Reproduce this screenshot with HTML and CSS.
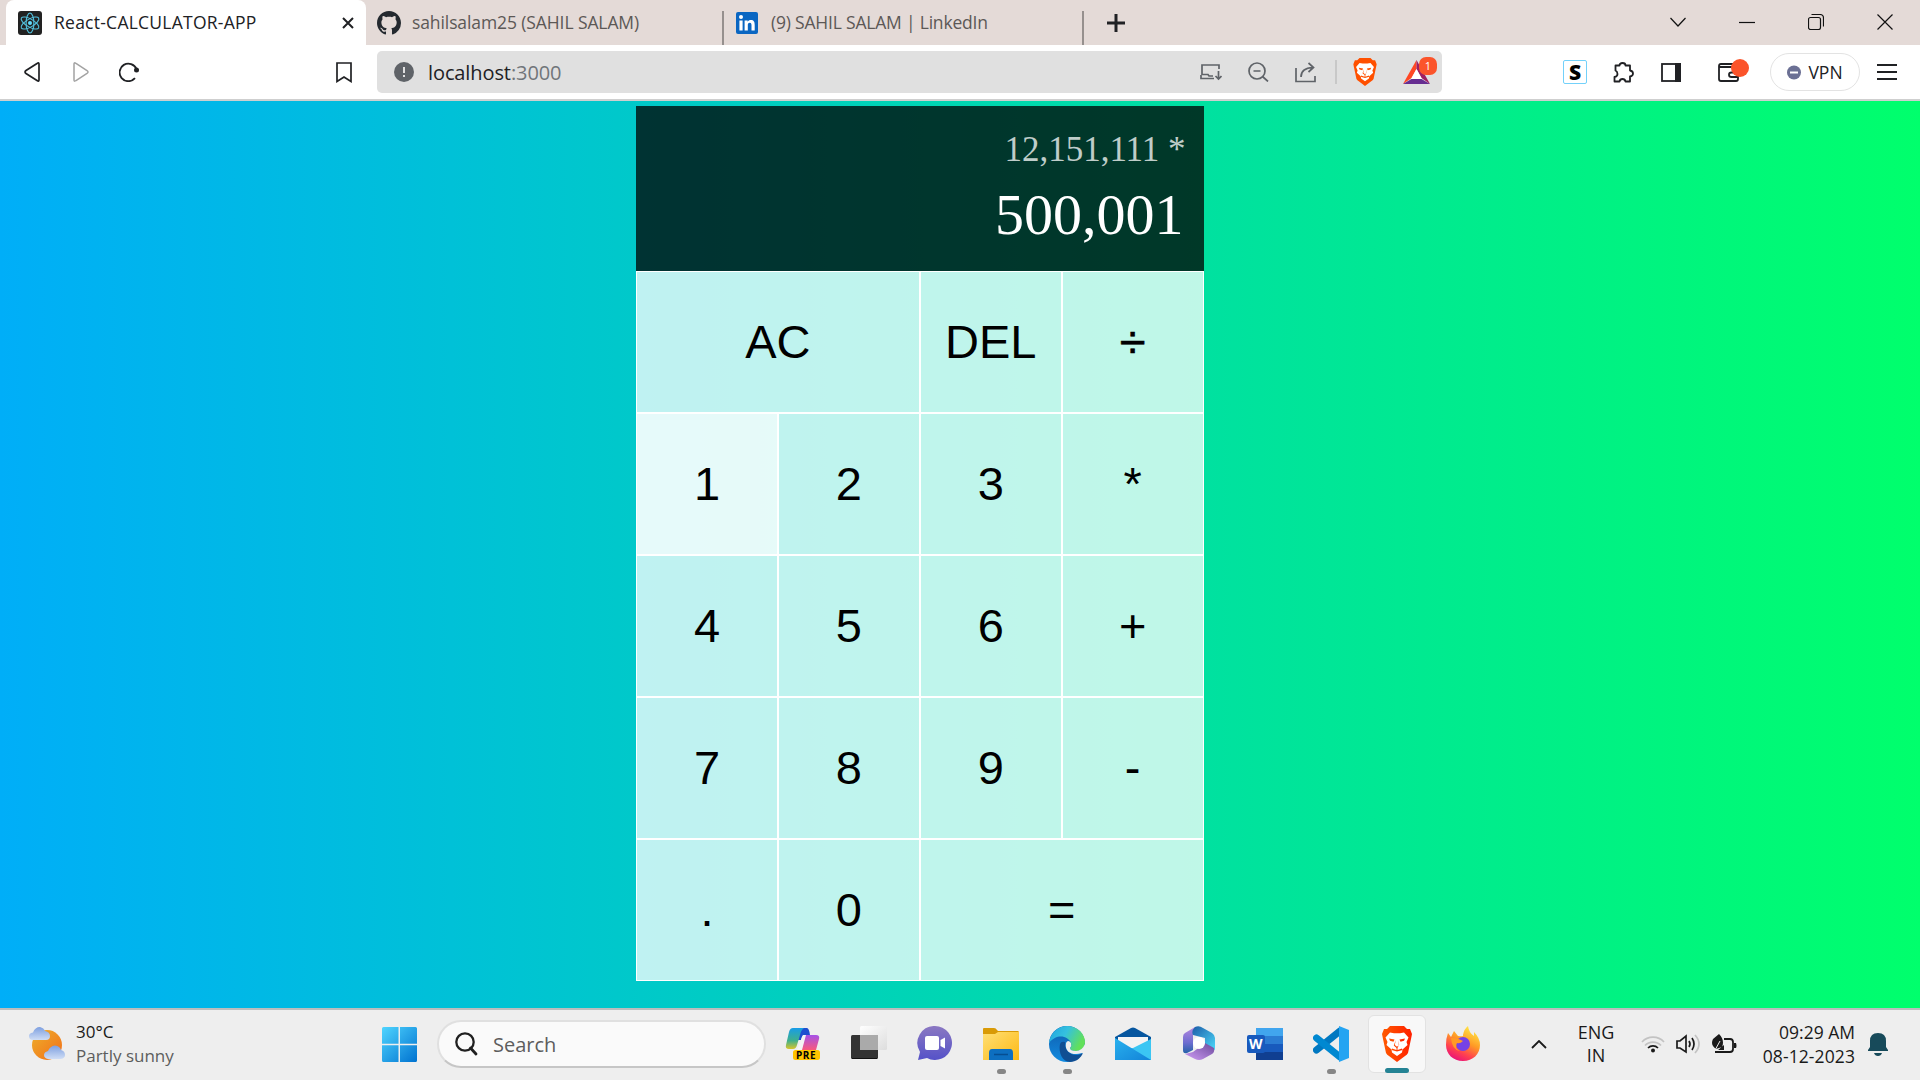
FILE: index.html
```html
<!DOCTYPE html>
<html lang="en">
<head>
<meta charset="utf-8">
<title>React-CALCULATOR-APP</title>
<link rel="stylesheet" href="styles.css">
</head>
<body>
<svg width="0" height="0" class="defs" aria-hidden="true">
  <defs>
    <linearGradient id="win" x1="0" y1="0" x2="1" y2="1"><stop offset="0" stop-color="#4fd5ff"/><stop offset="1" stop-color="#0072d0"/></linearGradient>
    <linearGradient id="sun" x1="0" y1="0" x2="1" y2="1"><stop offset="0" stop-color="#edb02d"/><stop offset="1" stop-color="#f36d16"/></linearGradient>
    <linearGradient id="cloud" x1="0" y1="0" x2="0" y2="1"><stop offset="0" stop-color="#7d9fe0"/><stop offset="1" stop-color="#cfddf5"/></linearGradient>
    <linearGradient id="copA" x1="0" y1="0" x2="0" y2="1"><stop offset="0" stop-color="#179ce8"/><stop offset=".6" stop-color="#3fb08c"/><stop offset="1" stop-color="#d8c52c"/></linearGradient>
    <linearGradient id="copB" x1="0" y1="0" x2="0" y2="1"><stop offset="0" stop-color="#a552e8"/><stop offset="1" stop-color="#f9597c"/></linearGradient>
    <linearGradient id="chat" x1="0" y1="0" x2="0" y2="1"><stop offset="0" stop-color="#8b78c2"/><stop offset="1" stop-color="#5552c8"/></linearGradient>
    <linearGradient id="fold" x1="0" y1="0" x2="1" y2="1"><stop offset="0" stop-color="#ffdf75"/><stop offset="1" stop-color="#fdb913"/></linearGradient>
    <linearGradient id="edgeT" x1="0" y1="0" x2="1" y2=".4"><stop offset="0" stop-color="#1fa3e0"/><stop offset=".5" stop-color="#35c1df"/><stop offset="1" stop-color="#62e05a"/></linearGradient>
    <linearGradient id="edgeB" x1="0" y1="0" x2="0" y2="1"><stop offset="0" stop-color="#0f5cab"/><stop offset="1" stop-color="#128be0"/></linearGradient>
    <linearGradient id="mail" x1="0" y1="0" x2="1" y2="1"><stop offset="0" stop-color="#29b1ee"/><stop offset="1" stop-color="#1283d8"/></linearGradient>
    <linearGradient id="offA" x1="0" y1="0" x2="1" y2="1"><stop offset="0" stop-color="#1c5da8"/><stop offset="1" stop-color="#4cd8fa"/></linearGradient>
    <linearGradient id="offB" x1="0" y1="0" x2="0" y2="1"><stop offset="0" stop-color="#b587e0"/><stop offset=".6" stop-color="#6d6dd0"/><stop offset="1" stop-color="#2462a8"/></linearGradient>
    <linearGradient id="offC" x1="0" y1="1" x2="1" y2="0"><stop offset="0" stop-color="#cf9cf5"/><stop offset="1" stop-color="#6b4a9c"/></linearGradient>
    <linearGradient id="brv" x1="0" y1="0" x2="1" y2="0"><stop offset="0" stop-color="#ff5a00"/><stop offset="1" stop-color="#ff2000"/></linearGradient>
    <linearGradient id="ff" x1=".8" y1="0" x2=".3" y2="1"><stop offset="0" stop-color="#fff04c"/><stop offset=".45" stop-color="#ff9a25"/><stop offset=".75" stop-color="#ff4050"/><stop offset="1" stop-color="#e8107c"/></linearGradient>
    <linearGradient id="glass" x1="0" y1="0" x2="1" y2="1"><stop offset="0" stop-color="#fff"/><stop offset="1" stop-color="#ddd"/></linearGradient>
    <symbol id="lion" viewBox="0 0 30 36">
      <path d="M8 0H22L25 3L28 3L30 8L29 13L26 27Q25 29 23 30L15 36L7 30Q5 29 4 27L1 13L0 8L2 3L5 3Z"/>
      <path fill="#fff" d="M8 6.500L12 7.200H18L22 6.500L26.500 11.500L24.500 16L25.500 19L20.500 23.500L20 26.500L15 30L10 26.500L9.500 23.500L4.500 19L5.500 16L3.500 11.500Z"/>
      <path d="M7 12.500L12.500 13.500L11.500 15.800L8 14.800ZM23 12.500L17.500 13.500L18.500 15.800L22 14.800ZM13.800 14L12.800 19L15 20.800L17.200 19L16.200 14L16.800 19.300L15.500 22V24L20 22.500L20.500 24L15 25.600L9.500 24L10 22.500L14.500 24V22L11.800 19.500Z"/>
    </symbol>
  </defs>
</svg>

<header class="tabs">
  <div class="tab tab-active">
    <svg class="fav" width="24" height="24" viewBox="0 0 24 24"><rect width="24" height="24" rx="3" fill="#222"/><g fill="none" stroke="#53c1de" stroke-width="1.1"><ellipse cx="12" cy="12" rx="10" ry="3.900" transform="rotate(30 12 12)"/><ellipse cx="12" cy="12" rx="10" ry="3.900" transform="rotate(90 12 12)"/><ellipse cx="12" cy="12" rx="10" ry="3.900" transform="rotate(150 12 12)"/></g><circle cx="12" cy="12" r="2" fill="#61dafb"/></svg>
    <span class="tab-title t1">React-CALCULATOR-APP</span>
    <svg class="tab-close" width="12" height="12" viewBox="0 0 12 12"><path d="M1 1L11 11M11 1L1 11" stroke="#202124" stroke-width="2"/></svg>
  </div>
  <div class="tab tab-git">
    <svg class="fav" width="24" height="24" viewBox="0 0 16 16"><path fill="#24292f" d="M8 0C3.58 0 0 3.58 0 8c0 3.54 2.29 6.53 5.47 7.59.4.07.55-.17.55-.38 0-.19-.01-.82-.01-1.49-2.01.37-2.53-.49-2.69-.94-.09-.23-.48-.94-.82-1.13-.28-.15-.68-.52-.01-.53.63-.01 1.08.58 1.23.82.72 1.21 1.87.87 2.33.66.07-.52.28-.87.51-1.07-1.78-.2-3.64-.89-3.64-3.95 0-.87.31-1.59.82-2.15-.08-.2-.36-1.02.08-2.12 0 0 .67-.21 2.2.82.64-.18 1.32-.27 2-.27s1.36.09 2 .27c1.53-1.04 2.2-.82 2.2-.82.44 1.1.16 1.92.08 2.12.51.56.82 1.27.82 2.15 0 3.07-1.87 3.75-3.65 3.95.29.25.54.73.54 1.48 0 1.07-.01 1.93-.01 2.2 0 .21.15.46.55.38A8.01 8.01 0 0 0 16 8c0-4.42-3.58-8-8-8z"/></svg>
    <span class="tab-title t2">sahilsalam25 (SAHIL SALAM)</span>
  </div>
  <div class="tab tab-in">
    <svg class="fav" width="22" height="22" viewBox="0 0 22 22"><rect width="22" height="22" rx="2" fill="#0a66c2"/><g fill="#fff"><circle cx="5" cy="5" r="2"/><path d="M3.4 8.4H6.6V18.5H3.4ZM8.6 8.4H11.6V9.8C12.3 8.7 13.4 8.1 14.8 8.1C18 8.1 18.7 10.2 18.7 13V18.5H15.5V13.6C15.5 12.2 15.4 10.8 13.8 10.8C12.2 10.8 11.8 12 11.8 13.4V18.5H8.6Z"/></g></svg>
    <span class="tab-title t3">(9) SAHIL SALAM | LinkedIn</span>
  </div>
  <svg class="newtab" width="18" height="18" viewBox="0 0 18 18"><path d="M9 0V18M0 9H18" stroke="#202124" stroke-width="3"/></svg>
  <div class="winctl">
    <svg width="16" height="16" viewBox="0 0 16 16"><path d="M.5 4L8 12L15.500 4"/></svg>
    <svg width="16" height="16" viewBox="0 0 16 16"><path d="M0 8.500H16"/></svg>
    <svg width="16" height="16" viewBox="0 0 16 16"><rect x=".5" y="3.500" width="12" height="12" rx="2"/><path d="M3.500 .5H12Q15.500 .5 15.500 4V12.500"/></svg>
    <svg width="16" height="16" viewBox="0 0 16 16"><path d="M.5 .5L15.500 15.500M15.500 .5L.5 15.500"/></svg>
  </div>
</header>

<nav class="toolbar">
  <svg class="nav-back" width="16" height="20" viewBox="0 0 16 20"><path d="M15 2V18Q15 20 13 18.500L2 11.500Q0 10 2 8.500L13 1.500Q15 0 15 2Z" fill="none" stroke="#202124" stroke-width="1.700"/></svg>
  <svg class="nav-fwd" width="16" height="20" viewBox="0 0 16 20"><path d="M1 2V18Q1 20 3 18.500L14 11.500Q16 10 14 8.500L3 1.500Q1 0 1 2Z" fill="none" stroke="#a3a3a3" stroke-width="1.500"/></svg>
  <svg class="nav-reload" width="21" height="20" viewBox="0 0 21 20"><path d="M16 16.200A8.800 8.800 0 1 1 17.500 7" fill="none" stroke="#202124" stroke-width="1.800"/><circle cx="17.500" cy="8" r="2.500" fill="#202124"/></svg>
  <svg class="nav-mark" width="16" height="21" viewBox="0 0 16 21"><path d="M1 1H15V19.500L8 15L1 19.500Z" fill="none" stroke="#202124" stroke-width="1.700"/></svg>
  <div class="address">
    <svg class="info" width="20" height="20" viewBox="0 0 20 20"><circle cx="10" cy="10" r="10" fill="#5f6368"/><path d="M10 5V11M10 13V15" stroke="#e0e0e0" stroke-width="2"/></svg>
    <span class="url">localhost<span class="port">:3000</span></span>
    <div class="addr-icons">
      <svg width="22" height="18" viewBox="0 0 22 18" fill="none" stroke="#5f6368" stroke-width="1.700"><path d="M2 12V2H19V6M2 11.500H8L9 13H13M1 12V15.500H14M18.500 8V15.500M15.500 13L18.500 16L21.500 13"/></svg>
      <svg width="21" height="20" viewBox="0 0 21 20" fill="none" stroke="#5f6368" stroke-width="1.700"><circle cx="9" cy="9" r="8"/><path d="M5.500 9H12.500M14.500 14.500L20 19.500"/></svg>
      <svg width="22" height="21" viewBox="0 0 22 21" fill="none" stroke="#5f6368" stroke-width="1.700"><path d="M1 6V19.500H20V14M6 15Q6 6 18 5.500M13.500 1L18.500 5.500L13.500 10"/></svg>
      <i class="addr-sep"></i>
      <svg class="lion-sm" width="24" height="28" fill="#ff5000"><use href="#lion" width="24" height="28"/></svg>
      <div class="bat"><svg width="27" height="24" viewBox="0 0 27 24"><path fill="#ff4724" d="M13.500 0L0 24L8.500 18L13.500 9Z"/><path fill="#9e1f63" d="M13.500 0L27 24L18.500 18L13.500 9Z"/><path fill="#662d91" d="M0 24H27L18.500 19H8.500Z"/><path fill="#fff" d="M13.500 9L19 19H8Z"/></svg><span class="badge">1</span></div>
    </div>
  </div>
  <div class="ext">
    <span class="ext-s">S</span>
    <svg width="21" height="21" viewBox="0 0 21 21"><path fill="none" stroke="#202124" stroke-width="1.800" stroke-linejoin="round" d="M2.500 3.500H6.500Q6.500 1 9.500 1Q12.500 1 12.500 3.500H17V8.500Q20 9 20 11.500Q20 14 17 14.500V19.500H12.500Q12 17 9.500 17Q7 17 6.500 19.500H1.500V15Q4.500 14.500 4.500 12Q4.500 9.500 2.500 8.500Z"/></svg>
    <svg width="20" height="19" viewBox="0 0 20 19"><rect x="1" y="1" width="18" height="17" fill="none" stroke="#202124" stroke-width="1.800"/><path d="M14 0H20V19H14Z" fill="#202124"/></svg>
    <div class="wallet"><svg width="21" height="19" viewBox="0 0 21 19" fill="none" stroke="#202124" stroke-width="1.800"><path d="M18 4V1H3Q1 1 1 3V16Q1 18 3 18H18Q20 18 20 16V4H1M20 9.500H13.500Q11 9.500 11 11.700Q11 14 13.500 14H20"/></svg><span class="dot"></span></div>
  </div>
  <div class="vpn"><svg width="14" height="15" viewBox="0 0 14 15"><circle cx="7" cy="7.500" r="7" fill="#6b7094"/><path d="M3 7.500H11" stroke="#fff" stroke-width="2"/></svg><span>VPN</span></div>
  <svg class="menu" width="20" height="16" viewBox="0 0 20 16"><path d="M0 1H20M0 8H20M0 15H20" stroke="#202124" stroke-width="1.800"/></svg>
</nav>

<main class="page">
  <div class="calculator">
    <div class="output">
      <div class="previous">12,151,111 *</div>
      <div class="current">500,001</div>
    </div>
    <button class="span-two">AC</button><button>DEL</button><button class="sign">÷</button>
    <button class="hover">1</button><button>2</button><button>3</button><button>*</button>
    <button>4</button><button>5</button><button>6</button><button>+</button>
    <button>7</button><button>8</button><button>9</button><button>-</button>
    <button>.</button><button>0</button><button class="span-two">=</button>
  </div>
</main>

<footer class="taskbar">
  <div class="weather">
    <svg width="37" height="34" viewBox="0 0 37 34"><circle cx="18" cy="18" r="15" fill="url(#sun)"/><path fill="url(#cloud)" d="M4 13Q0 13 0 9Q0 6 4 5.500Q6 0 11 0Q15 1 16 4Q21 5 21 9Q21 13 17 13Z"/><path fill="url(#cloud)" d="M19 32Q15 31 15 28Q15 25 19 24Q21 19 26 18.500Q31 19 32 23Q36 24 36 28Q36 31 32 32Z"/></svg>
    <div class="two-line"><span>30°C</span><span class="grey">Partly sunny</span></div>
  </div>
  <svg class="start" width="35" height="35" viewBox="0 0 35 35" fill="url(#win)"><path d="M1.500 0H16.500V16.800H0V1.500Q0 0 1.500 0ZM18 0H33.500Q35 0 35 1.500V16.800H18ZM0 18.200H16.500V35H1.500Q0 35 0 33.500ZM18 18.200H35V33.500Q35 35 33.500 35H18Z"/></svg>
  <div class="search"><svg width="23" height="24" viewBox="0 0 23 24"><circle cx="10" cy="10" r="8.700" fill="none" stroke="#202020" stroke-width="2.300"/><path d="M15.500 16L21 22" stroke="#202020" stroke-width="2.800" stroke-linecap="round"/></svg><span>Search</span></div>
  <div class="apps">
    <div class="app"><svg width="36" height="36" viewBox="0 0 36 36"><path fill="#1e4fd0" d="M15 2H22Q24 2 25 9H19Q17 9 16 14L13 14Z"/><path fill="url(#copA)" d="M8 2H19Q16 4 15 9L12 19Q11 23 8 23H4Q0 23 1 19L4 6Q5 2 8 2Z"/><path fill="#f4f4f4" d="M18 9H22L18 24H12Z"/><path fill="url(#copB)" d="M21 9H31Q35 9 34 13L31 24H17Z"/><rect x="8" y="24" width="27" height="10" rx="2.500" fill="#ffc400"/></svg><b class="pre">PRE</b></div>
    <div class="app"><svg width="36" height="36" viewBox="0 0 36 36"><rect x="0" y="9" width="27" height="24" rx="1.500" fill="#333"/><path d="M1 32.500H26" stroke="#111"/><rect x="9" width="27" height="24" rx="1.500" fill="url(#glass)"/><path fill="#aaa" d="M9 9H27V24H9Z"/></svg></div>
    <div class="app"><svg width="36" height="36" viewBox="0 0 36 36"><path fill="url(#chat)" d="M18 0A17 17 0 1 1 10 32L1 34L3 26A17 17 0 0 1 18 0Z"/><rect x="8" y="10" width="14" height="14" rx="2" fill="#fff"/><path fill="#fff" d="M23.500 14L28 11.500V22.500L23.500 20Z"/></svg></div>
    <div class="app run"><svg width="36" height="36" viewBox="0 0 36 36"><path fill="#d99a06" d="M1 2H11Q13 2 14 4L15 5H35Q36 5 36 7V14H0V3Q0 2 1 2Z"/><path fill="url(#fold)" d="M0 8H12L15 6H36V34H0Z"/><path fill="#0d6fc0" d="M6 34V27Q6 23 9 23H27Q30 23 30 27V34Z"/><path d="M11 28.500H25" stroke="#064e91" stroke-width="1.500"/></svg></div>
    <div class="app run"><svg width="36" height="36" viewBox="0 0 36 36"><circle cx="18" cy="18" r="18" fill="url(#edgeB)"/><path fill="url(#edgeT)" d="M0 17C1 7 9 0 18 0C29 0 36 8 36 16C36 22 32 25 27 25C23 25 21 24 21 22C22 21 23 20 22 17C19 10 8 7 0 17Z"/><path fill="#104e93" d="M11 18C9 27 14 36 21 36C27 36 32 32 34 27C24 33 15 25 16 16Q12 15 11 18Z"/><path fill="#eee" d="M17 17Q19 13 22 17Q23 20 21 22Q21 25 27 25Q33 25 36 18V24Q34 28 33 27C25 30 15 27 17 17Z"/></svg></div>
    <div class="app"><svg width="36" height="36" viewBox="0 0 36 36"><path fill="#06569f" d="M0 11L16 2Q18 1 20 2L36 11V15H0Z"/><path fill="#f3f3f3" d="M3 11H33V22H3Z"/><path fill="#3bc6f3" d="M36 13V34H0V24L18 22Z"/><path fill="url(#mail)" d="M0 12L36 34H0Z"/></svg></div>
    <div class="app"><svg width="36" height="36" viewBox="0 0 36 36"><path fill="url(#offB)" d="M14 1L4 7Q2 8 2 11V24Q2 28 6 27L12 24V8Q12 4 18 2Z"/><path fill="url(#offA)" d="M14 1Q18-1 22 2L31 7Q34 9 34 12V24L24 19V12L12 9Q10 5 14 1Z"/><path fill="url(#offC)" d="M4 28L12 26L24 17L33 22Q34 26 31 28L22 33Q18 35 14 33Z"/><circle cx="18" cy="17" r="6" fill="#fff"/></svg></div>
    <div class="app"><svg width="36" height="36" viewBox="0 0 36 36"><path fill="#41a5ee" d="M9 2H36V10H9Z"/><path fill="#2b7cd3" d="M9 10H36V18H9Z"/><path fill="#185abd" d="M9 18H36V26H9Z"/><path fill="#103f91" d="M9 26H36V34H9Z"/><rect y="9" width="18" height="18" rx="2" fill="#185abd"/></svg><b class="word">W</b></div>
    <div class="app run"><svg width="36" height="36" viewBox="0 0 36 36"><path d="M3.500 24L27 5" stroke="#0078c1" stroke-width="7" stroke-linecap="round"/><path d="M3.500 12L27 31" stroke="#0088d1" stroke-width="7" stroke-linecap="round"/><path fill="#24a4f2" d="M26 0L36 4V32L26 36Z"/></svg></div>
    <div class="app active"><svg width="30" height="36" fill="url(#brv)"><use href="#lion" width="30" height="36"/></svg></div>
    <div class="app"><svg width="36" height="36" viewBox="0 0 36 36"><path fill="url(#ff)" d="M3 7L6 11L9 5L13 10Q19 11 18 9Q19 3 23 0Q24 7 29 10V6Q35 12 35 19C35 28 28 35 18 35C8 35 1 28 1 19Q1 12 3 7Z"/><circle cx="18" cy="18" r="7" fill="#7542e5"/><path fill="#ff9a25" d="M6 12Q13 12 18 15Q15 18 12 17Q9 22 15 25Q7 24 6 12Z"/></svg></div>
  </div>
  <svg class="up" width="16" height="9" viewBox="0 0 16 9"><path d="M1 8L8 1L15 8" fill="none" stroke="#1a1a1a" stroke-width="1.800"/></svg>
  <div class="lang"><span>ENG</span><span>IN</span></div>
  <div class="tray">
    <svg width="24" height="18" viewBox="0 0 24 18" fill="none" stroke-width="1.700"><path stroke="#c3c3c3" d="M1 7A15 15 0 0 1 23 7M4 10.500A11 11 0 0 1 20 10.500"/><path stroke="#1a1a1a" d="M7 13A7 7 0 0 1 17 13"/><circle cx="12" cy="15.500" r="2" fill="#1a1a1a"/></svg>
    <svg width="25" height="20" viewBox="0 0 25 20" fill="none" stroke="#1a1a1a" stroke-width="1.700"><path d="M1 7H4L10 2V18L4 14H1ZM13 7Q15 10 13 13M16 4Q20 10 16 16"/><path stroke="#c3c3c3" d="M19 1Q27 10 19 19"/></svg>
    <svg width="25" height="20" viewBox="0 0 25 20"><path fill="none" stroke="#1a1a1a" stroke-width="1.800" d="M12 5H18Q21 5 21 8V15Q21 18 18 18H3"/><path fill="#1a1a1a" d="M22 9H24Q25 12 24 14H22ZM7 0Q13 6 10 13L4 15Q-2 11 1 5ZM6 16L12 11V16Z"/><path d="M2 18L8 7" stroke="#eee"/></svg>
  </div>
  <div class="clock"><span>09:29 AM</span><span class="date">08-12-2023</span></div>
  <svg class="bell" width="20" height="23" viewBox="0 0 20 23" fill="#174a5a"><path d="M10 0Q18 0 18 8V14L20 17V18H0V17L2 14V8Q2 0 10 0ZM6 20H14Q13 23 10 23Q7 23 6 20Z"/></svg>
</footer>
</body>
</html>
```

FILE: styles.css
```css
*,
*::before,
*::after { box-sizing: border-box; }

body {
  margin: 0;
  width: 1920px;
  height: 1080px;
  overflow: hidden;
  display: flex;
  flex-direction: column;
  font-family: "Open Sans", "Noto Sans", sans-serif;
  color: #202124;
}

svg { display: block; flex: none; }
.defs { position: absolute; }

/* Tab strip */
.tabs {
  flex: none;
  height: 45px;
  background: #e4dad7;
  display: flex;
  align-items: center;
  padding-left: 6px;
}
.tab { height: 45px; display: flex; align-items: center; font-size: 17.500px; color: #5c5856; white-space: nowrap; }
.tab-title { display: block; padding-bottom: 1px; }
.t1 { letter-spacing: .25px; }
.t2 { letter-spacing: -.1px; }
.t3 { letter-spacing: -.2px; }
.tab-active { width: 360px; padding: 0 12px; background: #fff; border-radius: 8px 8px 0 0; color: #202124; }
.tab-active .tab-title { margin-left: 12px; }
.tab-close { margin-left: auto; }
.tab-git { width: 358px; padding-left: 11px; }
.tab-git .tab-title { margin-left: 11px; }
.tab-in { width: 360px; padding-left: 12px; }
.tab-in .tab-title { margin-left: 13px; }
.tab-git, .tab-in { background: linear-gradient(#96908e, #96908e) right 11px / 2px 34px no-repeat; }
.newtab { margin-left: 23px; }
.winctl { margin: 0 27px 2px auto; display: flex; gap: 53px; }
.winctl svg { fill: none; stroke: #111; stroke-width: 1.200; }

/* Address row */
.toolbar {
  flex: none;
  height: 56px;
  background: #fff;
  border-bottom: 2px solid #cfcfcf;
  display: flex;
  align-items: center;
  padding-left: 24px;
}
.nav-fwd { margin-left: 33px; }
.nav-reload { margin-left: 30px; }
.nav-mark { margin-left: 196px; }
.address {
  flex: none;
  width: 1065px;
  height: 42px;
  margin-left: 25px;
  padding: 0 9px 0 17px;
  background: #e0e0e0;
  border-radius: 5px;
  display: flex;
  align-items: center;
}
.url { margin-left: 14px; font-size: 20px; letter-spacing: -.1px; }
.port { color: #70757a; }
.addr-icons { margin-left: auto; display: flex; align-items: center; }
.addr-icons > svg + svg { margin-left: 26px; }
.addr-sep { width: 2px; height: 24px; margin: 0 16px 0 18px; background: #c8c8c8; }
.bat { margin-left: 26px; width: 30px; height: 24px; position: relative; }
.badge {
  position: absolute;
  left: 16px;
  top: -3px;
  width: 18px;
  height: 18px;
  border-radius: 7px;
  background: #fb542b;
  color: #fff;
  font-size: 11px;
  line-height: 18px;
  text-align: center;
}
.ext { margin-left: 121px; display: flex; align-items: center; }
.ext-s {
  width: 24px;
  height: 24px;
  border: 1px solid #73d1fa;
  border-radius: 2px;
  font-size: 21px;
  font-weight: 800;
  line-height: 22px;
  text-align: center;
  color: #000;
}
.ext > svg { margin-left: 26px; }
.ext > svg + svg { margin-left: 27px; }
.wallet { position: relative; margin-left: 37px; }
.dot { position: absolute; left: 13px; top: -4px; width: 18px; height: 18px; border-radius: 50%; background: #fb542b; }
.vpn {
  flex: none;
  width: 90px;
  height: 38px;
  margin-left: 31px;
  border: 1px solid #e3e3e3;
  border-radius: 19px;
  display: flex;
  align-items: center;
  justify-content: center;
  gap: 7px;
  font-size: 17.500px;
}
.menu { margin-left: 17px; }

/* Calculator page */
.page {
  flex: none;
  height: 907px;
  padding: 5px 0 0 636px;
  background: linear-gradient(to right, #00aef8, #00ff6c);
}
.calculator {
  display: grid;
  grid-template-columns: repeat(4, 141.900px);
  grid-template-rows: 165px repeat(5, 142px);
}
.calculator button {
  border: 1px solid #fff;
  padding: 0 0 1px;
  background: rgba(255, 255, 255, .75);
  color: #000;
  font: 47px "Liberation Sans", sans-serif;
}
.calculator .hover { background: rgba(255, 255, 255, .9); }
.calculator .sign { -webkit-text-stroke: .6px #000; }
.span-two { grid-column: span 2; }
.output {
  grid-column: 1 / -1;
  padding: 24px 18px 23px;
  background: rgba(0, 0, 0, .75);
  display: flex;
  flex-direction: column;
  align-items: flex-end;
  justify-content: space-between;
  font-family: "Liberation Serif", serif;
}
.previous { font-size: 35px; color: rgba(255, 255, 255, .75); line-height: 40px; }
.current { font-size: 58px; color: #fff; line-height: 66px; padding-right: 2px; }

/* Taskbar */
.taskbar {
  flex: none;
  height: 72px;
  background: #eee;
  border-top: 2px solid #bdbdbd;
  padding-bottom: 2px;
  display: flex;
  align-items: center;
  color: #1a1a1a;
  font-size: 17px;
}
.weather { width: 382px; padding-left: 29px; display: flex; align-items: center; gap: 10px; }
.two-line, .lang, .clock { display: flex; flex-direction: column; line-height: 24px; }
.grey { color: #5d5d5d; }
.search {
  width: 329px;
  height: 48px;
  margin-left: 20px;
  padding-left: 16px;
  background: #fafafa;
  border: 2px solid #e0e0e0;
  border-bottom-color: #c6c6c6;
  border-radius: 24px;
  display: flex;
  align-items: center;
  gap: 15px;
  font-size: 20px;
  color: #5d5d5d;
}
.apps { margin-left: 8px; display: flex; gap: 8px; }
.app { width: 58px; height: 58px; position: relative; display: flex; align-items: center; justify-content: center; }
.app.active { background: #f8f8f8; border: 1px solid #e2e2e2; border-radius: 6px; }
.run::after, .active::after {
  content: "";
  position: absolute;
  left: 25px;
  bottom: -1px;
  width: 9px;
  height: 5px;
  border-radius: 3px;
  background: #868686;
}
.active::after { left: 16px; width: 24px; background: #248394; }
.pre { position: absolute; left: 22px; top: 34px; font-size: 10px; line-height: 13px; letter-spacing: .5px; color: #000; }
.word { position: absolute; left: 13px; top: 20px; font-size: 14px; line-height: 18px; color: #fff; }
.up { margin-left: 39px; }
.lang { width: 50px; margin-left: 24px; align-items: center; line-height: 23px; font-size: 18px; }
.tray { margin-left: 20px; display: flex; align-items: center; gap: 11px; }
.clock { width: 100px; margin-left: 18px; align-items: flex-end; font-size: 17.500px; }
.date { letter-spacing: .1px; }
.bell { margin-left: 13px; }
```
